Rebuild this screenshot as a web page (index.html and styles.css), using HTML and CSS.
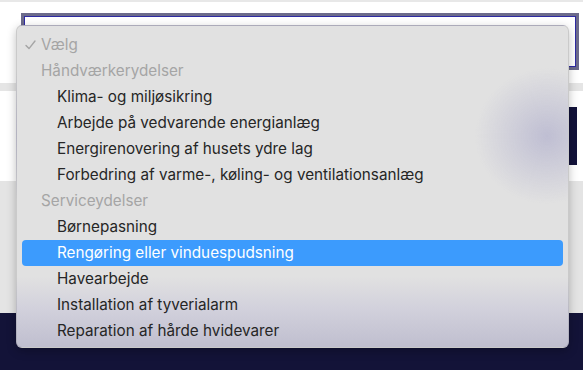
FILE: index.html
```html
<!DOCTYPE html>
<html lang="da">
<head>
  <meta charset="UTF-8" />
  <meta name="viewport" content="width=device-width, initial-scale=1.0" />
  <title>Vælg ydelse</title>
  <link rel="stylesheet" href="styles.css">
</head>
<body>
  <div class="page">
    <div class="top-line"></div>
    <!-- Select field (focused) -->
    <div class="field-row">
      <div class="select-box"></div>
    </div>
    <div class="band"></div>
    <div class="section">
      <div class="dark-button"></div>
    </div>
    <div class="gray-area"></div>
    <div class="footer"></div>
  </div>

  <!-- Open native dropdown menu -->
  <div class="menu">
    <div class="item disabled">
      <svg class="check" width="11" height="10" viewBox="0 0 11 10"><path d="M1 5.4 L4 8.6 L10 1" fill="none" stroke="#a5a5a5" stroke-width="1.4" stroke-linecap="round" stroke-linejoin="round"/></svg>Vælg
    </div>
    <div class="item group">Håndværkerydelser</div>
    <div class="item option">Klima- og miljøsikring</div>
    <div class="item option">Arbejde på vedvarende energianlæg</div>
    <div class="item option">Energirenovering af husets ydre lag</div>
    <div class="item option">Forbedring af varme-, køling- og ventilationsanlæg</div>
    <div class="item group">Serviceydelser</div>
    <div class="item option">Børnepasning</div>
    <div class="item option active">Rengøring eller vinduespudsning</div>
    <div class="item option">Havearbejde</div>
    <div class="item option">Installation af tyverialarm</div>
    <div class="item option">Reparation af hårde hvidevarer</div>
  </div>
</body>
</html>
```

FILE: styles.css
```css
* {
  margin: 0;
  padding: 0;
  box-sizing: border-box;
}
body {
  font-family: Inter, 'Liberation Sans', sans-serif;
  background-color: #fff;
  width: 583px;
  height: 370px;
  overflow: hidden;
  position: relative;
}
.page {
  display: flex;
  flex-direction: column;
  height: 370px;
}
.top-line {
  height: 2px;
  background: #e8e8e8;
}
/* Focused select field */
.field-row {
  padding: 11px 4px 0 21px;
  height: 81px;
}
.select-box {
  height: 57px;
  background: #fff;
  border: 3px solid #6c6b8b;
  box-shadow: inset 0 0 0 1px #2e2aa3;
}
.band {
  height: 8px;
  background: #e5e5e5;
}
.section {
  height: 90px;
  padding: 16px 6px 0 0;
  display: flex;
  justify-content: flex-end;
  background: #fff;
}
.dark-button {
  width: 160px;
  height: 58px;
  background: #12123a;
}
.gray-area {
  height: 132px;
  background: #e4e4e4;
}
.footer {
  flex: 1;
  background: #131338;
}
/* Dropdown menu overlay */
.menu {
  position: absolute;
  left: 16px;
  top: 25px;
  width: 553px;
  height: 323px;
  padding: 6px 5px 5px;
  border-radius: 6px;
  border: 1px solid rgba(0, 0, 0, 0.1);
  background:
    radial-gradient(ellipse 72px 68px at 530px 110px, rgba(185, 184, 208, 0.85), rgba(200, 200, 215, 0) 100%),
    linear-gradient(to bottom, #e1e1e1 0%, #e1e1e1 78%, #d2d1dc 88%, #bfbecf 100%);
  box-shadow: 0 3px 10px rgba(0, 0, 0, 0.25);
}
.item {
  height: 26px;
  line-height: 26px;
  font-size: 15.25px;
  color: #262626;
  border-radius: 4px;
  white-space: nowrap;
}
.item.disabled,
.item.group {
  color: #a5a5a5;
  padding-left: 19px;
}
.item.disabled {
  position: relative;
}
.check {
  position: absolute;
  left: 3px;
  top: 8px;
}
.item.option {
  padding-left: 35px;
}
.item.active {
  background: #3c9bfd;
  color: #fff;
}
```
